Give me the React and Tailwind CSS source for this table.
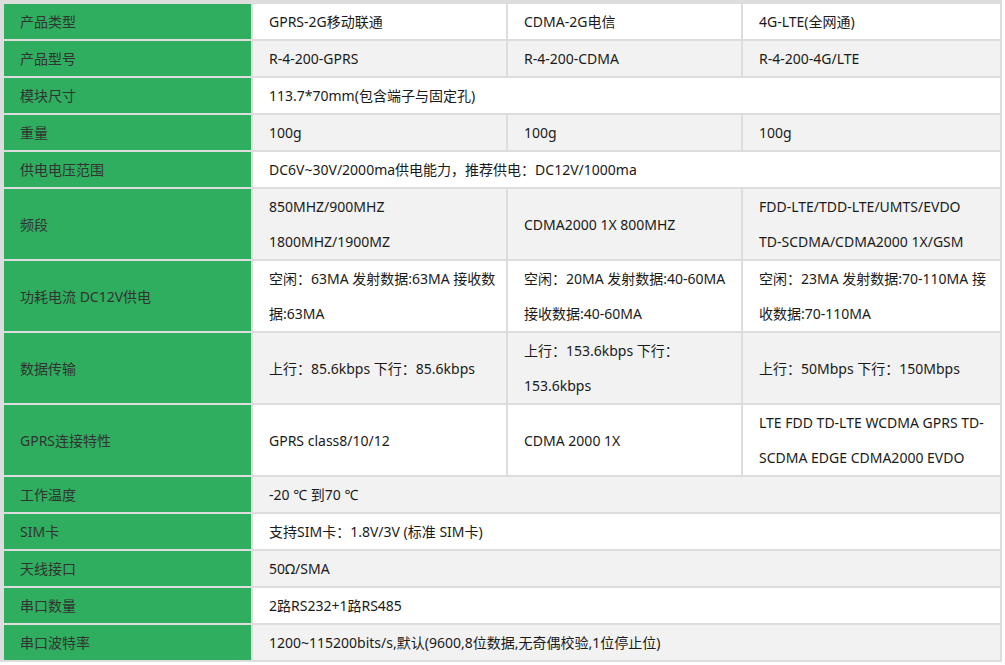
import React from 'react';

const rows = [
  { label: '产品类型', cells: [['GPRS-2G移动联通'], ['CDMA-2G电信'], ['4G-LTE(全网通)']] },
  { label: '产品型号', cells: [['R-4-200-GPRS'], ['R-4-200-CDMA'], ['R-4-200-4G/LTE']] },
  { label: '模块尺寸', span: ['113.7*70mm(包含端子与固定孔)'] },
  { label: '重量', cells: [['100g'], ['100g'], ['100g']] },
  { label: '供电电压范围', span: ['DC6V~30V/2000ma供电能力，推荐供电：DC12V/1000ma'] },
  {
    label: '频段',
    cells: [
      ['850MHZ/900MHZ', '1800MHZ/1900MZ'],
      ['CDMA2000 1X 800MHZ'],
      ['FDD-LTE/TDD-LTE/UMTS/EVDO', 'TD-SCDMA/CDMA2000 1X/GSM'],
    ],
  },
  {
    label: '功耗电流 DC12V供电',
    cells: [
      ['空闲：63MA 发射数据:63MA 接收数', '据:63MA'],
      ['空闲：20MA 发射数据:40-60MA', '接收数据:40-60MA'],
      ['空闲：23MA 发射数据:70-110MA 接', '收数据:70-110MA'],
    ],
  },
  {
    label: '数据传输',
    cells: [
      ['上行：85.6kbps 下行：85.6kbps'],
      ['上行：153.6kbps 下行：', '153.6kbps'],
      ['上行：50Mbps 下行：150Mbps'],
    ],
  },
  {
    label: 'GPRS连接特性',
    cells: [
      ['GPRS class8/10/12'],
      ['CDMA 2000 1X'],
      ['LTE FDD TD-LTE WCDMA GPRS TD-', 'SCDMA EDGE CDMA2000 EVDO'],
    ],
  },
  { label: '工作温度', span: ['-20 ℃ 到70 ℃'] },
  { label: 'SIM卡', span: ['支持SIM卡：1.8V/3V (标准 SIM卡)'] },
  { label: '天线接口', span: ['50Ω/SMA'] },
  { label: '串口数量', span: ['2路RS232+1路RS485'] },
  { label: '串口波特率', span: ['1200~115200bits/s,默认(9600,8位数据,无奇偶校验,1位停止位)'] },
];

function Lines({ lines }) {
  return (
    <div>
      {lines.map((l, i) => (
        <div key={i} className="whitespace-nowrap">{l}</div>
      ))}
    </div>
  );
}

export default function App() {
  return (
    <div className="w-[1005px] h-[665px] bg-white">
      <div
        className="w-[1002px] grid grid-cols-[247px_253px_233px_257px] gap-[2px] bg-[#dddddd] pt-[4px] pl-[4px] pr-[2px] pb-[2px] text-[14px] leading-[35px] text-[#1a1a1a]"
        style={{ fontFamily: '"Noto Sans", "Noto Sans CJK SC", sans-serif' }}
      >
        {rows.map((r, i) => {
          const bg = i % 2 === 0 ? 'bg-white' : 'bg-[#f2f2f2]';
          return (
            <React.Fragment key={r.label}>
              <div className="bg-[#2eae5e] text-[#333333] pl-4 flex items-center whitespace-nowrap">
                {r.label}
              </div>
              {r.span ? (
                <div className={'col-span-3 pl-4 flex items-center ' + bg}>
                  <Lines lines={r.span} />
                </div>
              ) : (
                r.cells.map((c, j) => (
                  <div key={j} className={'pl-4 flex items-center ' + bg}>
                    <Lines lines={c} />
                  </div>
                ))
              )}
            </React.Fragment>
          );
        })}
      </div>
    </div>
  );
}
